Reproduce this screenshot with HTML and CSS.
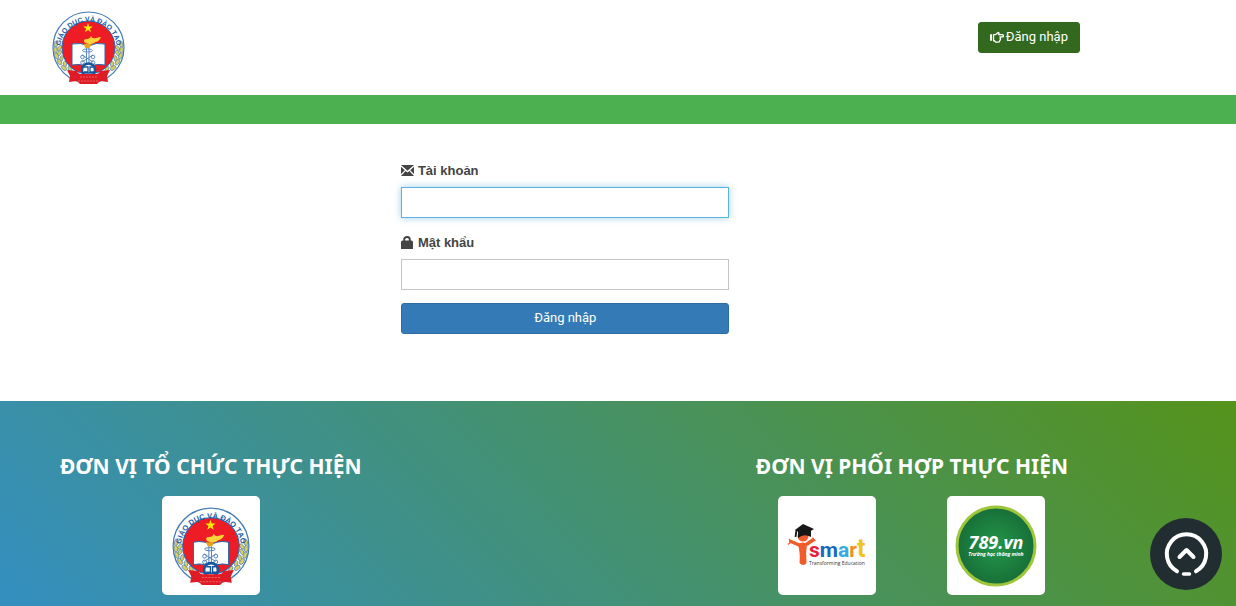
FILE: index.html
```html
<!DOCTYPE html>
<html lang="vi">
<head>
<meta charset="utf-8">
<meta name="viewport" content="width=device-width, initial-scale=1">
<title>Đăng nhập</title>
<link rel="stylesheet" href="styles.css">
</head>
<body>
<svg class="sprite" aria-hidden="true">
  <defs>
    <path id="arc" d="M16 46A28.500 28.500 0 1 1 73 46"/>
    <g id="sprig" fill="#d9ce62" stroke="#5b87b5" stroke-width=".7">
      <ellipse cx="12" cy="40" rx="1.800" ry="3.200" transform="rotate(15 12 40)"/>
      <ellipse cx="15.500" cy="44" rx="1.600" ry="3" transform="rotate(40 15.500 44)"/>
      <ellipse cx="11.500" cy="46" rx="1.800" ry="3.200" transform="rotate(-5 11.500 46)"/>
      <ellipse cx="15.500" cy="49" rx="1.600" ry="3" transform="rotate(30 15.500 49)"/>
      <ellipse cx="12.500" cy="52" rx="1.800" ry="3.200" transform="rotate(-20 12.500 52)"/>
      <ellipse cx="17.500" cy="54.500" rx="1.600" ry="3" transform="rotate(15 17.500 54.500)"/>
      <ellipse cx="15.500" cy="58" rx="1.800" ry="3.200" transform="rotate(-35 15.500 58)"/>
      <ellipse cx="21" cy="60" rx="1.600" ry="3" transform="rotate(-5 21 60)"/>
      <ellipse cx="20" cy="64" rx="1.800" ry="3.200" transform="rotate(-50 20 64)"/>
      <ellipse cx="26" cy="65" rx="1.600" ry="3" transform="rotate(-25 26 65)"/>
    </g>
    <symbol id="emblem" viewBox="7 6 75 75">
      <circle cx="44.500" cy="43.500" r="35.500" fill="#fff" stroke="#3f7ab8" stroke-width="1.200"/>
      <use href="#sprig"/>
      <use href="#sprig" transform="matrix(-1 0 0 1 89 0)"/>
      <circle cx="44.500" cy="43.500" r="26.500" fill="#ee1c25" stroke="#2468b0" stroke-width="1"/>
      <text class="emblem-text"><textPath href="#arc" startOffset="50%" text-anchor="middle">GIÁO DỤC VÀ ĐÀO TẠO</textPath></text>
      <path d="M44 19l1.200 3.500h3.600l-2.900 2.200 1.100 3.500-3-2.100-3 2.100 1.100-3.500-2.900-2.200h3.600z" fill="#ffed00"/>
      <path d="M28 40q9-2 16.500 2 7.500-4 16.500-2v21q-9-2-16.500 2-7.500-4-16.500-2z" fill="#fff" stroke="#2468b0" stroke-width="1"/>
      <path d="M39.500 40h8l-2 4h-4z" fill="#e8a31b"/>
      <path d="M41 39q-3-4 2-4 3 0 4-3 1 3 5 2 3-1 5-1-2 5-6 5-1 2-6 2z" fill="#ffd43a"/>
      <g fill="none" stroke="#5080b8" stroke-width=".9">
        <ellipse cx="43.500" cy="46.500" rx="5" ry="1.500"/>
        <path d="M42.500 44v18M45 44v18M38 51l11 7M49 51l-11 7"/>
        <circle cx="38.500" cy="53" r="1.800"/><circle cx="49" cy="53" r="1.800"/>
        <circle cx="38.500" cy="58.500" r="1.800"/><circle cx="49" cy="58.500" r="1.800"/>
      </g>
      <circle cx="44.500" cy="66" r="6.500" fill="#fff" stroke="#17569e" stroke-width="2.500"/>
      <path d="M40 63h4v5h-4M49 63h-3v5h4M38 69h13" fill="none" stroke="#17569e" stroke-width="1.300"/>
      <path d="M23 66l10 1q1 3 4 3h15q3 0 4-3l10-1-3 6 1 6-8-1-3 3H36l-3-3-8 1 1-6z" fill="#df1b26"/>
      <path d="M36 73h17M34 77h21" stroke="#f0706c" stroke-width=".8" stroke-dasharray="2 1"/>
    </symbol>
    <radialGradient id="disc"><stop offset="0" stop-color="#24964a"/><stop offset="1" stop-color="#176f38"/></radialGradient>
  </defs>
</svg>

<header class="header">
  <a href="#" aria-label="Trang chủ"><svg class="brand" aria-hidden="true"><use href="#emblem"/></svg></a>
  <button class="btn btn-green" type="button">
    <svg class="hand" viewBox="0 0 15 14" aria-hidden="true"><path d="M0 3.500h2.200v7H0z" fill="#fff"/><path d="M3.800 4h1.900l3-2.500q1.500 0 .5 2.500h4q1.200 0 1.200 1.200t-1.200 1.200H10.500q1.500.8.300 2 .9 1-.3 1.800 0 1.700-1.500 1.700H6L4.800 10.500h-1z" fill="none" stroke="#fff" stroke-width="1.400" stroke-linejoin="round"/></svg>
    <span>Đăng nhập</span>
  </button>
</header>
<nav class="strip"></nav>

<main class="main">
  <form class="form">
    <div class="field">
      <label for="account"><svg class="icon" viewBox="0 0 13 13" aria-hidden="true"><path d="M0 1h13L6.500 6.800zM0 2.700L3.800 6.300 0 10zM13 2.700L9.200 6.300 13 10zM0 12l4.600-5L6.500 8.600 8.400 7l4.600 5z" fill="#444"/></svg> Tài khoản</label>
      <input id="account" type="text" autofocus>
    </div>
    <div class="field">
      <label for="password"><svg class="icon" viewBox="0 0 13 13" aria-hidden="true"><path d="M0 6q0-1.500 1.500-1.500h9Q12 4.500 12 6v7H0z" fill="#444"/><path d="M3.200 6V3.500Q3.200 1 6 1t2.800 2.500V6" fill="none" stroke="#444" stroke-width="1.900"/></svg> Mật khẩu</label>
      <input id="password" type="password">
    </div>
    <button class="btn btn-blue" type="submit">Đăng nhập</button>
  </form>
</main>

<footer class="footer">
  <section class="unit">
    <h2>ĐƠN VỊ TỔ CHỨC THỰC HIỆN</h2>
    <div class="tiles">
      <a class="tile" href="#" aria-label="Giáo dục và Đào tạo"><svg class="tile-emblem" aria-hidden="true"><use href="#emblem"/></svg></a>
    </div>
  </section>
  <section class="unit">
    <h2>ĐƠN VỊ PHỐI HỢP THỰC HIỆN</h2>
    <div class="tiles">
      <a class="tile" href="#" aria-label="iSmart">
        <svg class="logo" viewBox="0 0 98 98">
          <path d="M13 44.500l8 3.500M29 47l6-4" stroke="#f15a29" stroke-width="3.500" stroke-linecap="round"/>
          <path d="M12 45l-.5-2.500M12 46l-1.500 1M35 43v-2M35 43l2 .5" stroke="#f15a29" stroke-width="1.400" stroke-linecap="round"/>
          <circle cx="25" cy="39" r="5.500" fill="#f15a29"/>
          <path d="M20 47q5-3 9 0-1.500 9-.5 19-3 4-7 0 1-9-1.500-19z" fill="#f15a29"/>
          <path d="M25 27l11 5-10 6-9-5z" fill="#171717"/>
          <path d="M20 34l6 2 7-3v7q-7-4-13 1z" fill="#171717"/>
          <path d="M18.500 33l-1 7" stroke="#171717" stroke-width="1.800"/>
          <text class="smart" x="31" y="60"><tspan fill="#ed1c35">s</tspan><tspan fill="#1769bd">m</tspan><tspan fill="#31ace2">a</tspan><tspan fill="#f68b1f">r</tspan><tspan class="tall" fill="#f0c419">t</tspan></text>
          <text class="slogan" x="31" y="68">Transforming Education</text>
        </svg>
      </a>
      <a class="tile" href="#" aria-label="789.vn">
        <svg class="logo" viewBox="0 0 98 98">
          <circle cx="49" cy="49" r="39" fill="url(#disc)" stroke="#9dc63b" stroke-width="3"/>
          <text class="site" x="49" y="52" text-anchor="middle">789.vn</text>
          <text class="site-slogan" x="49" y="59" text-anchor="middle">Trường học thông minh</text>
        </svg>
      </a>
    </div>
  </section>
</footer>

<button class="to-top" type="button" aria-label="Lên đầu trang">
  <svg viewBox="0 0 72 72" fill="none" stroke="#fff" stroke-width="4" stroke-linecap="round" stroke-linejoin="round" aria-hidden="true">
    <path d="M27 53.300A19.700 19.700 0 1 1 46 53.300M29.500 39l7-7 7 7"/>
    <path d="M33.500 56h6" stroke-width="3.500"/>
  </svg>
</button>
</body>
</html>
```

FILE: styles.css
```css
* { box-sizing: border-box; }

body {
  margin: 0;
  min-height: 100vh;
  display: flex;
  flex-direction: column;
  background: #fff;
  color: #444;
  font: 13px/20px "Liberation Sans", Arial, sans-serif;
}

.sprite { position: absolute; width: 0; height: 0; }
.emblem-text { font: bold 7px "Liberation Sans", Arial, sans-serif; fill: #175da8; }

.header {
  display: flex;
  justify-content: space-between;
  align-items: flex-start;
  padding: 10px 156px 10px 51px;
}
.header a { display: block; }
.brand { display: block; width: 75px; height: 75px; }

.strip { height: 29px; background: #4caf50; }

.btn {
  display: flex;
  align-items: center;
  justify-content: center;
  height: 31px;
  padding: 0 11px 1px;
  border: 1px solid;
  border-radius: 3px;
  color: #fff;
  font: 13px/20px Roboto, sans-serif;
  cursor: pointer;
}
.btn-green { margin-top: 12px; background: #33691e; border-color: #33691e; gap: 2px; }
.btn-blue { width: 100%; background: #337ab7; border-color: #2e6da4; }
.hand { width: 14px; height: 13px; }

.main { padding: 35px 16px 67px; }
.form { width: 328px; max-width: 100%; margin-left: 32%; }
.field { margin-bottom: 13px; }
.field label { display: block; margin-bottom: 4px; font-weight: bold; line-height: 24px; }
.icon { width: 13px; height: 13px; vertical-align: -2px; }
.field input {
  display: block;
  width: 100%;
  height: 31px;
  padding: 5px 10px;
  border: 1px solid #c5c5cb;
  border-radius: 0;
  font: inherit;
  outline: 0;
  caret-color: transparent;
}
.field input:focus { border-color: #5cb3dd; box-shadow: 0 0 7px rgba(92, 179, 221, .6); }

.footer {
  flex: 1;
  display: flex;
  flex-wrap: wrap;
  justify-content: space-between;
  padding: 50px 168px 11px 60px;
  background: linear-gradient(45deg, #348fc0, #55931b);
}
.unit h2 {
  margin: 0 0 15px;
  color: #fff;
  font: bold 21px/30px "Noto Sans", "Open Sans", sans-serif;
}
.tiles { display: flex; justify-content: center; gap: 71px; }
.tile {
  display: grid;
  place-items: center;
  width: 98px;
  height: 99px;
  background: #fff;
  border-radius: 5px;
}
.tile-emblem { width: 80px; height: 80px; }
.logo { width: 98px; height: 98px; }
.smart { font: bold 21px Roboto, sans-serif; }
.tall { font-size: 25px; }
.slogan { font: 5px "Open Sans", sans-serif; fill: #333; }
.site { font: italic bold 18px "Open Sans", sans-serif; fill: #fff; }
.site-slogan { font: italic bold 5px "Open Sans", sans-serif; fill: #fff; }

.to-top {
  position: fixed;
  right: 14px;
  bottom: 16px;
  width: 72px;
  height: 72px;
  padding: 0;
  border: 0;
  border-radius: 50%;
  background: #222d32;
  cursor: pointer;
}
.to-top svg { display: block; width: 72px; height: 72px; }
```
